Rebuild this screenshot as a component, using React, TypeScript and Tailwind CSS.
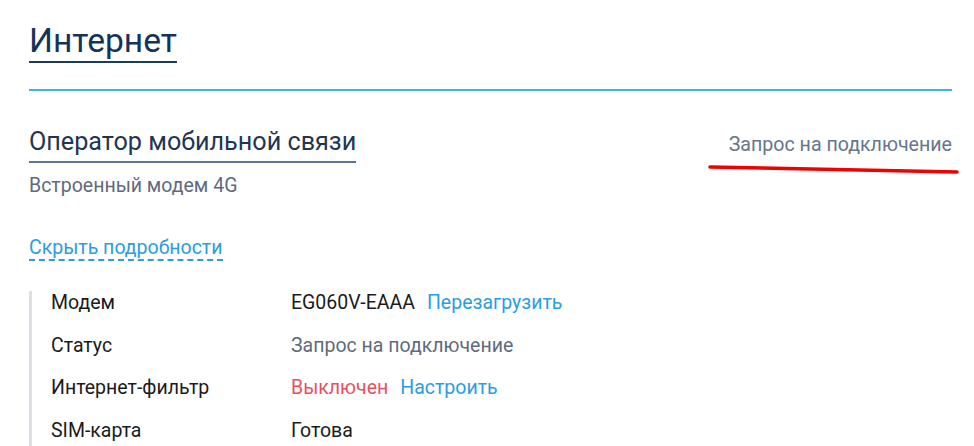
import React from 'react'

const rows = [
  { label: 'Модем', value: <><span className="text-[#1b1b1b]">EG060V-EAAA</span><span className="ml-[12px] text-[#2b9de0]">Перезагрузить</span></> },
  { label: 'Статус', value: <span className="text-[#5f6b7c]">Запрос на подключение</span> },
  { label: 'Интернет-фильтр', value: <><span className="text-[#e8505f]">Выключен</span><span className="ml-[12px] text-[#2b9de0]">Настроить</span></> },
  { label: 'SIM-карта', value: <span className="text-[#1b1b1b]">Готова</span> },
]

export default function App() {
  return (
    <div className="relative w-[974px] h-[446px] overflow-hidden bg-white pl-[29px] pr-[22px] font-['Roboto',sans-serif]">
      {/* Page title */}
      <h1 className="mt-[21px] inline-block text-[33.6px] leading-[40px] text-[#13345a] border-b-2 border-[#1a3a60]">
        Интернет
      </h1>
      <div className="mt-[26px] h-[2px] bg-[#3ab4ea]" />

      {/* Operator header */}
      <div className="mt-[36px] flex justify-between items-start">
        <div>
          <h2 className="inline-block text-[25.2px] leading-[30px] pb-[4px] text-[#1f3552] border-b-2 border-[#5c7693]">
            Оператор мобильной связи
          </h2>
          <div className="mt-[12px] text-[19.5px] leading-[22px] text-[#5f6b7c]">Встроенный модем 4G</div>
        </div>
        <div className="mt-[6px] text-[19.6px] leading-[24px] text-[#66768b]">Запрос на подключение</div>
      </div>

      {/* Toggle link */}
      <div className="mt-[39px] flex">
        <span className="text-[19.5px] leading-[23px] text-[#2b9de0] border-b-2 border-dashed border-[#2b9de0]">
          Скрыть подробности
        </span>
      </div>

      {/* Details */}
      <div className="mt-[30px] border-l-[3px] border-[#dcdfe6] pl-[19px]">
        {rows.map((r) => (
          <div key={r.label} className="flex h-[42.7px] items-start text-[19.5px] leading-[24px]">
            <div className="w-[240px] text-[#1b1b1b]">{r.label}</div>
            <div>{r.value}</div>
          </div>
        ))}
      </div>

      {/* Red annotation stroke */}
      <svg className="absolute left-[706px] top-[162px]" width="256" height="16" viewBox="0 0 256 16">
        <path d="M4 5 C 60 6, 140 8, 251 10" stroke="#f00000" strokeWidth="3.5" fill="none" strokeLinecap="round" />
      </svg>
    </div>
  )
}
